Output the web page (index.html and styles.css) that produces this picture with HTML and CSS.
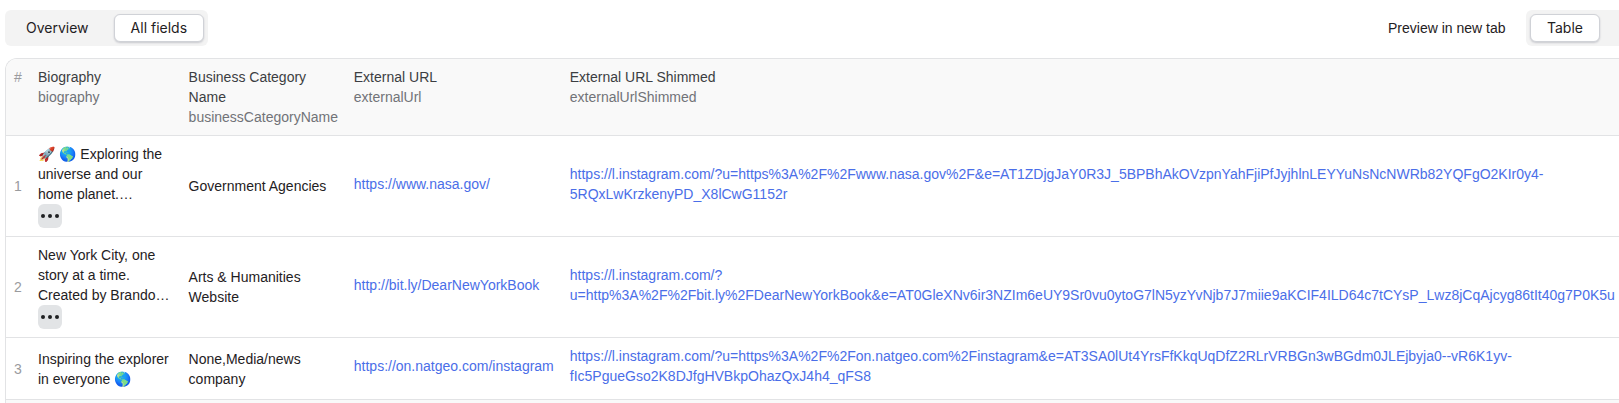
FILE: index.html
```
<!DOCTYPE html>
<html lang="en">
<head>
<meta charset="utf-8">
<title>Dataset preview</title>
<link rel="stylesheet" href="styles.css">
</head>
<body>
<div class="toolbar">
  <div class="tabs">
    <button class="tab">Overview</button>
    <button class="tab tab-active">All fields</button>
  </div>
  <div class="actions">
    <a class="preview">Preview in new tab</a>
    <div class="tabs view-tabs">
      <button class="tab tab-active">Table</button>
    </div>
  </div>
</div>
<div class="panel">
  <div class="row head">
    <div class="cell num">#</div>
    <div class="cell">Biography<span class="key">biography</span></div>
    <div class="cell">Business Category Name<span class="key">businessCategoryName</span></div>
    <div class="cell">External URL<span class="key">externalUrl</span></div>
    <div class="cell">External URL Shimmed<span class="key">externalUrlShimmed</span></div>
  </div>
  <div class="row">
    <div class="cell num">1</div>
    <div class="cell"><div class="bio"><span class="emoji">🚀 🌎</span> Exploring the<br>universe and our<br>home planet.…</div><button class="more" aria-label="More"><svg width="20" height="6" viewBox="0 0 20 6"><circle cx="3" cy="3" r="2"/><circle cx="10" cy="3" r="2"/><circle cx="17" cy="3" r="2"/></svg></button></div>
    <div class="cell">Government Agencies</div>
    <div class="cell link"><a>https://www.nasa.gov/</a></div>
    <div class="cell link"><a>https://l.instagram.com/?u=https%3A%2F%2Fwww.nasa.gov%2F&amp;e=AT1ZDjgJaY0R3J_5BPBhAkOVzpnYahFjiPfJyjhlnLEYYuNsNcNWRb82YQFgO2KIr0y4-<br>5RQxLwKrzkenyPD_X8lCwG1152r</a></div>
  </div>
  <div class="row">
    <div class="cell num">2</div>
    <div class="cell"><div class="bio">New York City, one<br>story at a time.<br>Created by Brando…</div><button class="more" aria-label="More"><svg width="20" height="6" viewBox="0 0 20 6"><circle cx="3" cy="3" r="2"/><circle cx="10" cy="3" r="2"/><circle cx="17" cy="3" r="2"/></svg></button></div>
    <div class="cell">Arts &amp; Humanities Website</div>
    <div class="cell link"><a>http://bit.ly/DearNewYorkBook</a></div>
    <div class="cell link"><a>https://l.instagram.com/?<br>u=http%3A%2F%2Fbit.ly%2FDearNewYorkBook&amp;e=AT0GleXNv6ir3NZIm6eUY9Sr0vu0ytoG7lN5yzYvNjb7J7miie9aKCIF4ILD64c7tCYsP_Lwz8jCqAjcyg86tIt40g7P0K5u</a></div>
  </div>
  <div class="row">
    <div class="cell num">3</div>
    <div class="cell"><div class="bio">Inspiring the explorer<br>in everyone 🌎</div></div>
    <div class="cell">None,Media/news company</div>
    <div class="cell link"><a>https://on.natgeo.com/instagram</a></div>
    <div class="cell link"><a>https://l.instagram.com/?u=https%3A%2F%2Fon.natgeo.com%2Finstagram&amp;e=AT3SA0lUt4YrsFfKkqUqDfZ2RLrVRBGn3wBGdm0JLEjbyja0--vR6K1yv-<br>fIc5PgueGso2K8DJfgHVBkpOhazQxJ4h4_qFS8</a></div>
  </div>
  <div class="footer"></div>
</div>
</body>
</html>
```
FILE: styles.css
```
* { box-sizing: border-box; }

body {
  margin: 0;
  height: 403px;
  padding: 10px 0 0 5px;
  overflow: hidden;
  background: #fff;
  color: #1f2123;
  font: 14px/20px "Liberation Sans", Arial, sans-serif;
}

button { margin: 0; font: inherit; color: inherit; }

.toolbar {
  display: flex;
  justify-content: space-between;
  height: 36px;
  margin-bottom: 12px;
}

.tabs {
  display: flex;
  gap: 8px;
  padding: 4px;
  border-radius: 6px;
  background: #f3f3f3;
}

.tab {
  height: 28px;
  padding: 0 16px;
  border: 1px solid transparent;
  border-radius: 6px;
  background: none;
  font: 14px/20px Inter, sans-serif;
  white-space: nowrap;
}

.tab-active {
  border-color: #d0d2d7;
  background: #fff;
  box-shadow: 0 1px 2px rgba(30, 35, 60, 0.2);
}

.actions { display: flex; align-items: center; gap: 20.5px; }

.view-tabs { width: 93px; border-radius: 6px 0 0 6px; }

.panel {
  height: 360px;
  border-top: 1px solid #e2e3e5;
  border-left: 1px solid #e2e3e5;
  border-top-left-radius: 12px;
  overflow: hidden;
}

.row {
  display: grid;
  grid-template-columns: 24px 150.6px 165.2px 216px 1fr;
  align-items: center;
  border-bottom: 1px solid #e2e3e5;
}

.head { align-items: start; background: #f9f9f9; color: #3c3e42; }

.cell { padding: 8px; min-width: 0; }

.num { color: #9a9b9e; }

.key { display: block; color: #717378; }

.bio { white-space: nowrap; }

.emoji { margin-right: 0.6px; }

.link { white-space: nowrap; color: #4a6ee8; }

.link a { display: block; padding-bottom: 5px; }

.more {
  display: flex;
  align-items: center;
  justify-content: center;
  width: 24px;
  height: 24px;
  padding: 0;
  border: 0;
  border-radius: 6px;
  background: #e2e4e6;
}

.more svg { fill: #1f2123; }

.footer { height: 4px; background: #f9f9f9; }
```
